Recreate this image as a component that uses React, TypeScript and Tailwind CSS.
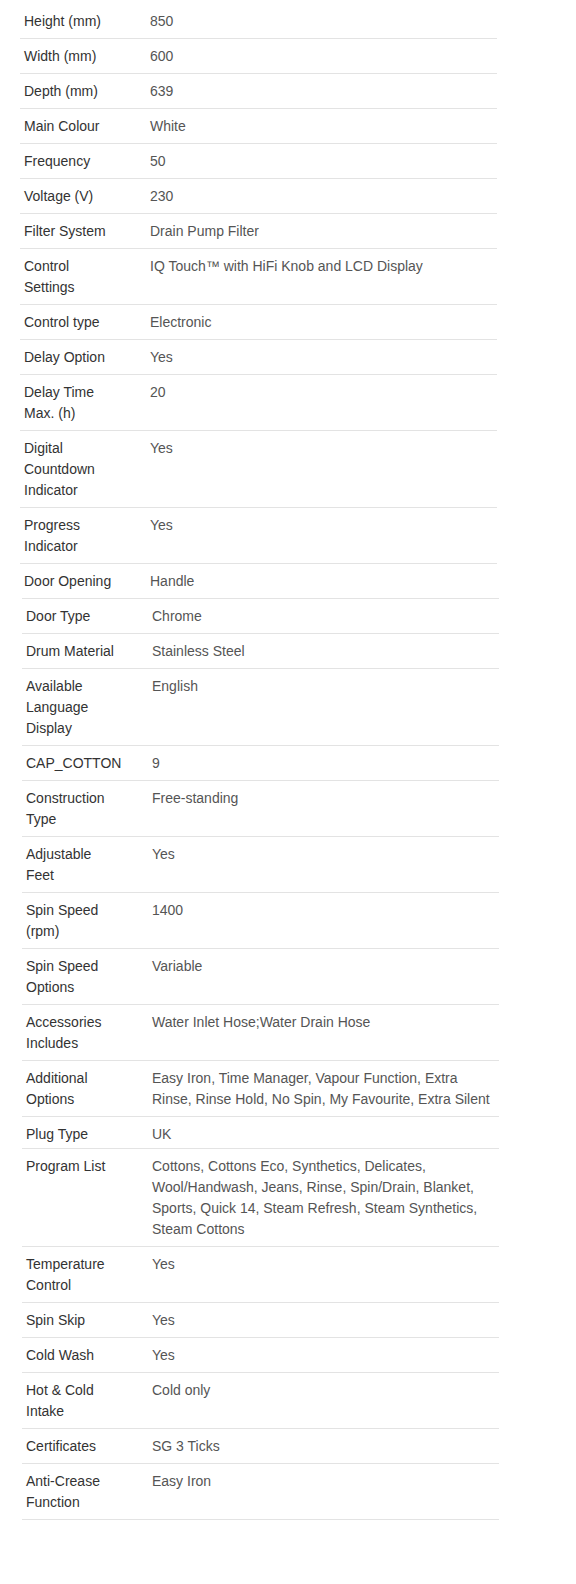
type Spec = { label: string; value: string; tight?: boolean };

const general: Spec[] = [
  { label: "Height (mm)", value: "850" },
  { label: "Width (mm)", value: "600" },
  { label: "Depth (mm)", value: "639" },
  { label: "Main Colour", value: "White" },
  { label: "Frequency", value: "50" },
  { label: "Voltage (V)", value: "230" },
  { label: "Filter System", value: "Drain Pump Filter" },
  { label: "Control Settings", value: "IQ Touch™ with HiFi Knob and LCD Display" },
  { label: "Control type", value: "Electronic" },
  { label: "Delay Option", value: "Yes" },
  { label: "Delay Time Max. (h)", value: "20" },
  { label: "Digital Countdown Indicator", value: "Yes" },
  { label: "Progress Indicator", value: "Yes" },
  { label: "Door Opening", value: "Handle" },
];

const features: Spec[] = [
  { label: "Door Type", value: "Chrome" },
  { label: "Drum Material", value: "Stainless Steel" },
  { label: "Available Language Display", value: "English" },
  { label: "CAP_COTTON", value: "9" },
  { label: "Construction Type", value: "Free-standing" },
  { label: "Adjustable Feet", value: "Yes" },
  { label: "Spin Speed (rpm)", value: "1400" },
  { label: "Spin Speed Options", value: "Variable" },
  { label: "Accessories Includes", value: "Water Inlet Hose;Water Drain Hose" },
  {
    label: "Additional Options",
    value:
      "Easy Iron, Time Manager, Vapour Function, Extra Rinse, Rinse Hold, No Spin, My Favourite, Extra Silent",
  },
  { label: "Plug Type", value: "UK", tight: true },
  {
    label: "Program List",
    value:
      "Cottons, Cottons Eco, Synthetics, Delicates, Wool/Handwash, Jeans, Rinse, Spin/Drain, Blanket, Sports, Quick 14, Steam Refresh, Steam Synthetics, Steam Cottons",
  },
  { label: "Temperature Control", value: "Yes" },
  { label: "Spin Skip", value: "Yes" },
  { label: "Cold Wash", value: "Yes" },
  { label: "Hot & Cold Intake", value: "Cold only" },
  { label: "Certificates", value: "SG 3 Ticks" },
  { label: "Anti-Crease Function", value: "Easy Iron" },
];

const SpecRow = ({ spec, first }: { spec: Spec; first?: boolean }) => (
  <div
    className={`grid grid-cols-[130px_1fr] border-t ${
      first ? "border-white" : "border-[#e3e3e3]"
    } pt-[7px] ${spec.tight ? "pb-[3px]" : "pb-[6px]"}`}
  >
    <div className="pl-1 pr-[30px] text-[#333333]">{spec.label}</div>
    <div className="text-[#555555]">{spec.value}</div>
  </div>
);

export default function App() {
  return (
    <div className="min-h-[1584px] w-[576px] bg-white pt-[3px] text-[14px] leading-[21px] font-['Liberation_Sans',Arial,sans-serif]">
      <div className="ml-5 w-[477px]">
        {general.map((s, i) => (
          <SpecRow key={s.label} spec={s} first={i === 0} />
        ))}
      </div>
      <div className="ml-[22px] w-[477px] border-b border-[#e3e3e3]">
        {features.map((s) => (
          <SpecRow key={s.label} spec={s} />
        ))}
      </div>
    </div>
  );
}
